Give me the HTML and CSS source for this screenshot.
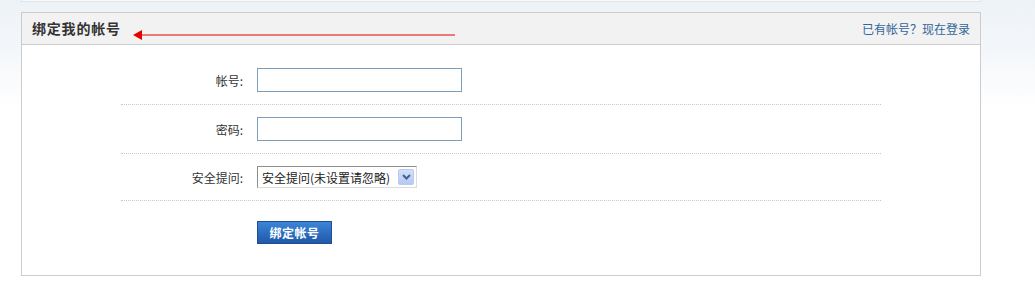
FILE: index.html
```html
<!DOCTYPE html>
<html lang="zh-CN">
<head>
<meta charset="utf-8">
<title>绑定我的帐号</title>
<link rel="stylesheet" href="styles.css">
</head>
<body>
<div class="wrap">
  <div class="prev"></div>
  <div class="box">
    <div class="box-head">
      <h2 class="box-title">绑定我的帐号</h2>
      <a class="login-link" href="#">已有帐号？现在登录</a>
      <svg class="annot-arrow" width="325" height="12" viewBox="0 0 325 12">
        <polygon points="0,6 9,1 9,11" fill="#e60000"/>
        <rect x="8" y="5.5" width="314" height="1" fill="#e60000"/>
      </svg>
    </div>
    <form class="bind-form">
      <div class="row">
        <label class="lbl">帐号:</label>
        <input class="txt" type="text">
      </div>
      <div class="row">
        <label class="lbl">密码:</label>
        <input class="txt" type="password">
      </div>
      <div class="row">
        <label class="lbl">安全提问:</label>
        <div class="sel">
          <span class="sel-text">安全提问(未设置请忽略)</span>
          <span class="sel-btn">
            <svg width="9" height="6" viewBox="0 0 9 6"><path d="M1 1 L4.5 4.5 L8 1" fill="none" stroke="#4a5f8a" stroke-width="2"/></svg>
          </span>
        </div>
      </div>
      <div class="row row-btn">
        <button class="btn" type="button">绑定帐号</button>
      </div>
    </form>
  </div>
</div>
</body>
</html>
```
FILE: styles.css
```css
html, body {
  margin: 0;
  padding: 0;
}
body {
  background: linear-gradient(to bottom, #edf2f7 0, #f4f7fa 50px, #ffffff 110px) no-repeat;
  font-family: "Noto Sans CJK SC", "Liberation Sans", sans-serif;
  font-size: 12px;
  color: #333;
  height: 288px;
}
.wrap {
  margin-left: 21px;
  width: 960px;
}
.prev {
  height: 1px;
  background: #f9fafc;
  border: 1px solid #dfe4e9;
  border-top: none;
}
.box {
  margin-top: 10px;
  border: 1px solid #cccccc;
  background: #fff;
}
.box-head {
  position: relative;
  height: 31px;
  background: #f2f2f2;
  border-bottom: 1px solid #cccccc;
  display: flex;
  align-items: center;
  justify-content: space-between;
  padding: 0 10px 0 10px;
}
.box-title {
  margin: 0;
  font-size: 14px;
  font-weight: bold;
  letter-spacing: 0.8px;
  color: #333;
  line-height: 31px;
}
.login-link {
  color: #336699;
  text-decoration: none;
  font-size: 12px;
  line-height: 31px;
}
.annot-arrow {
  position: absolute;
  left: 111px;
  top: 16px;
}
.bind-form {
  width: 760px;
  margin: 0 auto;
  padding-top: 11px;
}
.row {
  display: flex;
  align-items: center;
  padding: 12px 0;
  border-bottom: 1px dotted #c8c8c8;
}
.lbl {
  width: 122px;
  margin-right: 14px;
  text-align: right;
  color: #333;
  font-size: 12px;
}
.txt {
  box-sizing: border-box;
  width: 205px;
  height: 24px;
  border: 1px solid #7f9db9;
  margin: 0;
  padding: 2px 4px;
  font: inherit;
  background: #fff;
}
.sel {
  box-sizing: border-box;
  width: 160px;
  height: 22px;
  display: flex;
  align-items: center;
  justify-content: space-between;
  border: 1px solid;
  border-color: #8f8f8f #dcdcdc #dcdcdc #8f8f8f;
  padding: 0 2px 0 4px;
  background: #fff;
  color: #222;
}
.sel-text {
  font-size: 12px;
  white-space: nowrap;
}
.sel-btn {
  box-sizing: border-box;
  width: 16px;
  height: 16px;
  display: flex;
  align-items: center;
  justify-content: center;
  background: linear-gradient(to bottom, #d3e0fb, #b5c9f3);
  border: 1px solid #b7cbf2;
  border-radius: 2px;
}
.row-btn {
  border-bottom: none;
  padding: 20px 0 31px 136px;
}
.btn {
  box-sizing: border-box;
  width: 75px;
  height: 23px;
  margin: 0;
  padding: 0;
  border: 1px solid #1d4e8f;
  background: linear-gradient(to bottom, #3c85d8 0, #2b6cc0 55%, #2159a8 100%);
  color: #fff;
  font: bold 12px "Noto Sans CJK SC", "Liberation Sans", sans-serif;
  letter-spacing: 0.5px;
  cursor: pointer;
}
```
